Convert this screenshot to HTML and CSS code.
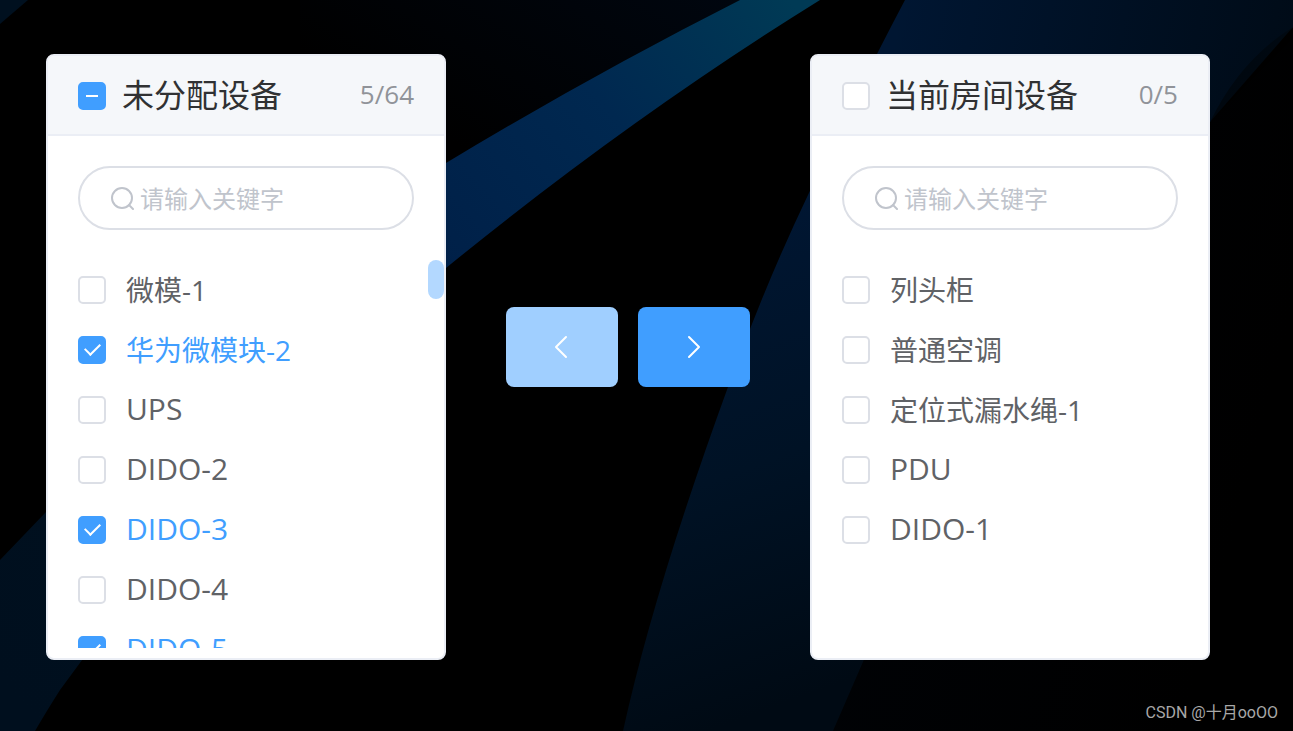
FILE: index.html
```html
<!DOCTYPE html>
<html lang="zh-CN">
<head>
    <meta charset="UTF-8">
    <meta name="viewport" content="width=device-width, initial-scale=1.0">
    <title>设备分配</title>
    <link rel="stylesheet" href="styles.css">
</head>
<body>
    <svg class="backdrop" viewBox="0 0 1293 731" preserveAspectRatio="xMidYMid slice" aria-hidden="true">
        <defs>
            <linearGradient id="band" gradientUnits="userSpaceOnUse" x1="790" y1="0" x2="0" y2="680">
                <stop offset="0" stop-color="#003a55"/>
                <stop offset="0.2" stop-color="#002850"/>
                <stop offset="0.42" stop-color="#002048"/>
                <stop offset="0.85" stop-color="#00101f"/>
                <stop offset="1" stop-color="#000f1e"/>
            </linearGradient>
            <linearGradient id="wide" gradientUnits="userSpaceOnUse" x1="800" y1="200" x2="960" y2="640">
                <stop offset="0" stop-color="#001632"/>
                <stop offset="0.5" stop-color="#001225"/>
                <stop offset="1" stop-color="#000a14"/>
            </linearGradient>
            <linearGradient id="shade" gradientUnits="userSpaceOnUse" x1="900" y1="0" x2="1293" y2="80">
                <stop offset="0" stop-color="#000a14" stop-opacity="0"/>
                <stop offset="1" stop-color="#000a14" stop-opacity="0.9"/>
            </linearGradient>
            <linearGradient id="side" x1="0" y1="0" x2="1" y2="0.4">
                <stop offset="0" stop-color="#000307"/>
                <stop offset="1" stop-color="#000000"/>
            </linearGradient>
            <linearGradient id="top" x1="0" y1="1" x2="1" y2="0">
                <stop offset="0.4" stop-color="#000000"/>
                <stop offset="1" stop-color="#00060f"/>
            </linearGradient>
        </defs>
        <path fill="url(#top)" d="M300 0H740Q590 76 446 163L300 260Z"/>
        <path fill="#00101f" d="M0 0H28L0 24Z"/>
        <path fill="url(#band)" d="M740 0Q590 76 446 163Q220 310 46 512L0 560V731H35Q46 712 60 690Q240 440 446 268Q630 118 820 0Z"/>
        <path fill="url(#side)" d="M1293 38L1210 122Q980 360 863 662L833 731H1293Z"/>
        <path fill="url(#wide)" d="M905 0Q860 85 808 195Q765 285 728 387Q654 590 623 731H833L863 662Q980 360 1210 122Q1240 60 1293 27V0Z"/>
        <path fill="url(#shade)" d="M905 0L880 54L1210 122L1293 27V0Z"/>
    </svg>

    <main class="transfer">
        <section class="panel">
            <header class="panel-header">
                <label class="panel-title">
                    <input type="checkbox" class="checkbox partial">
                    <span>未分配设备</span>
                </label>
                <span class="count">5/64</span>
            </header>
            <label class="search">
                <svg class="search-icon" viewBox="0 0 24 24" aria-hidden="true">
                    <circle cx="12" cy="12" r="10"/>
                    <path d="M19 19L23 23"/>
                </svg>
                <input type="text" placeholder="请输入关键字" aria-label="请输入关键字">
            </label>
            <div class="list-wrap">
                <ul class="list">
                    <li><label class="item"><input type="checkbox" class="checkbox"><span>微模-1</span></label></li>
                    <li><label class="item"><input type="checkbox" class="checkbox" checked><span>华为微模块-2</span></label></li>
                    <li><label class="item latin"><input type="checkbox" class="checkbox"><span>UPS</span></label></li>
                    <li><label class="item latin"><input type="checkbox" class="checkbox"><span>DIDO-2</span></label></li>
                    <li><label class="item latin"><input type="checkbox" class="checkbox" checked><span>DIDO-3</span></label></li>
                    <li><label class="item latin"><input type="checkbox" class="checkbox"><span>DIDO-4</span></label></li>
                    <li><label class="item latin"><input type="checkbox" class="checkbox" checked><span>DIDO-5</span></label></li>
                </ul>
                <div class="scroll-thumb"></div>
            </div>
        </section>

        <div class="actions">
            <button type="button" class="move-button" aria-label="移到左侧" disabled>
                <svg viewBox="0 0 28 28" aria-hidden="true"><path d="M18 4L8 14L18 24"/></svg>
            </button>
            <button type="button" class="move-button" aria-label="移到右侧">
                <svg viewBox="0 0 28 28" aria-hidden="true"><path d="M9 4L19 14L9 24"/></svg>
            </button>
        </div>

        <section class="panel">
            <header class="panel-header">
                <label class="panel-title">
                    <input type="checkbox" class="checkbox">
                    <span>当前房间设备</span>
                </label>
                <span class="count">0/5</span>
            </header>
            <label class="search">
                <svg class="search-icon" viewBox="0 0 24 24" aria-hidden="true">
                    <circle cx="12" cy="12" r="10"/>
                    <path d="M19 19L23 23"/>
                </svg>
                <input type="text" placeholder="请输入关键字" aria-label="请输入关键字">
            </label>
            <div class="list-wrap">
                <ul class="list">
                    <li><label class="item"><input type="checkbox" class="checkbox"><span>列头柜</span></label></li>
                    <li><label class="item"><input type="checkbox" class="checkbox"><span>普通空调</span></label></li>
                    <li><label class="item"><input type="checkbox" class="checkbox"><span>定位式漏水绳-1</span></label></li>
                    <li><label class="item latin"><input type="checkbox" class="checkbox"><span>PDU</span></label></li>
                    <li><label class="item latin"><input type="checkbox" class="checkbox"><span>DIDO-1</span></label></li>
                </ul>
            </div>
        </section>
    </main>

    <div class="watermark">CSDN @十月ooOO</div>
</body>
</html>
```
FILE: styles.css
```css
* {
    box-sizing: border-box;
}

body {
    position: relative;
    min-height: 100vh;
    margin: 0;
    overflow: hidden;
    background: #000;
    font-family: "Open Sans", "Noto Sans CJK SC", sans-serif;
}

.backdrop {
    position: absolute;
    top: 0;
    left: 0;
    width: 100%;
    height: 100%;
}

.transfer {
    position: relative;
    display: flex;
    align-items: center;
    gap: 60px;
    padding: 54px 46px;
}

.panel {
    flex: 0 0 400px;
    padding-bottom: 10px;
    border: 2px solid #ebeef5;
    border-radius: 8px;
    background: #fff;
    overflow: hidden;
}

.panel-header {
    display: flex;
    align-items: center;
    justify-content: space-between;
    height: 80px;
    padding: 0 30px;
    border-bottom: 2px solid #ebeef5;
    background: #f5f7fa;
}

.panel-title {
    display: flex;
    align-items: center;
    gap: 16px;
    font-size: 32px;
    line-height: 40px;
    color: #303133;
    cursor: pointer;
}

.panel-title .checkbox {
    margin-top: 2px;
}

.count {
    padding-bottom: 2px;
    font-size: 26px;
    line-height: 40px;
    color: #909399;
}

.checkbox {
    appearance: none;
    position: relative;
    flex: none;
    width: 28px;
    height: 28px;
    margin: 0;
    border: 2px solid #dcdfe6;
    border-radius: 5px;
    background: #fff;
    cursor: pointer;
}

.checkbox:checked,
.checkbox.partial {
    border-color: #409eff;
    background: #409eff;
}

.checkbox:checked::after {
    content: "";
    position: absolute;
    top: 2px;
    left: 8px;
    width: 7px;
    height: 13px;
    border: solid #fff;
    border-width: 0 2px 2px 0;
    transform: rotate(45deg);
}

.checkbox.partial::after {
    content: "";
    position: absolute;
    top: 11px;
    left: 6px;
    width: 12px;
    height: 2px;
    background: #fff;
}

.search {
    display: flex;
    align-items: center;
    gap: 6px;
    height: 64px;
    margin: 30px;
    padding: 0 30px;
    border: 2px solid #dcdfe6;
    border-radius: 32px;
}

.search-icon {
    flex: none;
    width: 24px;
    height: 24px;
    fill: none;
    stroke: #c0c4cc;
    stroke-width: 2;
    stroke-linecap: round;
}

.search input {
    flex: 1;
    min-width: 0;
    padding: 0;
    border: 0;
    outline: 0;
    background: none;
    font-family: inherit;
    font-size: 24px;
    color: #606266;
}

.search input::placeholder {
    color: #c0c4cc;
}

.list-wrap {
    position: relative;
}

.list {
    height: 388px;
    margin: 0;
    padding: 0;
    list-style: none;
    overflow-y: auto;
    scrollbar-width: none;
}

.item {
    display: flex;
    align-items: center;
    gap: 20px;
    height: 60px;
    padding: 0 30px;
    font-size: 28px;
    line-height: 40px;
    color: #606266;
    cursor: pointer;
}

.item.latin {
    font-size: 30px;
}

.item.latin span {
    padding-bottom: 2px;
}

.item:has(:checked) {
    color: #409eff;
}

.scroll-thumb {
    position: absolute;
    top: 0;
    right: 0;
    width: 16px;
    height: 39px;
    border-radius: 8px;
    background: #b3d8ff;
}

.actions {
    display: flex;
    gap: 20px;
    padding-bottom: 20px;
}

.move-button {
    display: flex;
    align-items: center;
    justify-content: center;
    width: 112px;
    height: 80px;
    padding: 0;
    border: 0;
    border-radius: 8px;
    background: #409eff;
    cursor: pointer;
}

.move-button:disabled {
    background: #a0cfff;
    cursor: not-allowed;
}

.move-button svg {
    width: 28px;
    height: 28px;
    fill: none;
    stroke: #fff;
    stroke-width: 2;
    stroke-linecap: round;
    stroke-linejoin: round;
}

.watermark {
    position: absolute;
    right: 15px;
    bottom: 8px;
    font-family: Roboto, "Noto Sans CJK SC", sans-serif;
    font-size: 16px;
    line-height: 20px;
    color: #a8a8a8;
}
```
